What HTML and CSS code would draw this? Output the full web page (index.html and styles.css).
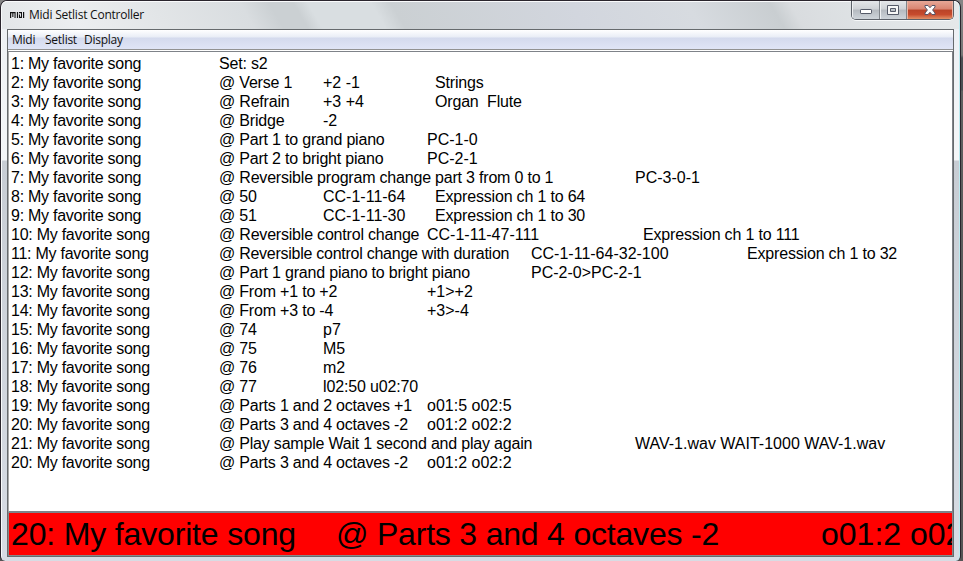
FILE: index.html
```html
<!DOCTYPE html>
<html lang="en">
<head>
<meta charset="utf-8">
<title>Midi Setlist Controller</title>
<link rel="stylesheet" href="styles.css">
</head>
<body>
<div class="window">
  <header class="titlebar">
    <svg class="logo" width="15" height="6" viewBox="0 0 15 6" fill="#111"><path d="M0 0H5.600V6H4.500V1.200H3.400V5H2.300V1.200H1.200V6H0zM6.900 0H8.100V6H6.900zM9 0H12V6H9V2.500H10V4.800H11V1.200H9zM13 0H14.200V6H13z"/></svg>
    <span class="title">Midi Setlist Controller</span>
    <div class="controls">
      <button class="control" aria-label="Minimize"><svg width="14" height="14" viewBox="0 0 14 14"><rect x="1.5" y="6.500" width="11" height="4" rx=".6" fill="#fff" stroke="#555a68"/></svg></button>
      <button class="control" aria-label="Maximize"><svg width="14" height="14" viewBox="0 0 14 14"><path d="M1.500 2.500h11v9h-11zM4.500 5.500v3h5v-3z" fill="#f7f7f7" fill-rule="evenodd" stroke="#555a68"/></svg></button>
      <button class="control close" aria-label="Close"><svg width="14" height="14" viewBox="0 0 14 14"><path d="M2 2.500H5L7 4.700l2-2.200h3v1.500L9.600 7l2.400 3v1.500H9L7 9.300l-2 2.200H2V10L4.400 7 2 4z" fill="#fff" stroke="#555568"/></svg></button>
    </div>
  </header>
  <main class="client">
    <nav class="menu"><span class="m1">Midi</span><span class="m2">Setlist</span><span class="m3">Display</span></nav>
    <section class="list">
      <div class="row"><span>1: My favorite song</span><span class="c2">Set: s2</span></div>
      <div class="row"><span>2: My favorite song</span><span class="c2">@ Verse 1</span><span class="c3">+2 -1</span><span class="c4 inset">Strings</span></div>
      <div class="row"><span>3: My favorite song</span><span class="c2">@ Refrain</span><span class="c3">+3 +4</span><span class="c4 inset">Organ&nbsp; Flute</span></div>
      <div class="row"><span>4: My favorite song</span><span class="c2">@ Bridge</span><span class="c3">-2</span></div>
      <div class="row"><span>5: My favorite song</span><span class="c2">@ Part 1 to grand piano</span><span class="c4">PC-1-0</span></div>
      <div class="row"><span>6: My favorite song</span><span class="c2">@ Part 2 to bright piano</span><span class="c4">PC-2-1</span></div>
      <div class="row"><span>7: My favorite song</span><span class="c2">@ Reversible program change part 3 from 0 to 1</span><span class="c6">PC-3-0-1</span></div>
      <div class="row"><span>8: My favorite song</span><span class="c2">@ 50</span><span class="c3">CC-1-11-64</span><span class="c4 inset">Expression ch 1 to 64</span></div>
      <div class="row"><span>9: My favorite song</span><span class="c2">@ 51</span><span class="c3">CC-1-11-30</span><span class="c4 inset">Expression ch 1 to 30</span></div>
      <div class="row"><span>10: My favorite song</span><span class="c2">@ Reversible control change</span><span class="c4">CC-1-11-47-111</span><span class="c6 inset">Expression ch 1 to 111</span></div>
      <div class="row"><span>11: My favorite song</span><span class="c2 tight">@ Reversible control change with duration</span><span class="c5">CC-1-11-64-32-100</span><span class="c7 inset">Expression ch 1 to 32</span></div>
      <div class="row"><span>12: My favorite song</span><span class="c2">@ Part 1 grand piano to bright piano</span><span class="c5">PC-2-0&gt;PC-2-1</span></div>
      <div class="row"><span>13: My favorite song</span><span class="c2">@ From +1 to +2</span><span class="c4">+1&gt;+2</span></div>
      <div class="row"><span>14: My favorite song</span><span class="c2">@ From +3 to -4</span><span class="c4">+3&gt;-4</span></div>
      <div class="row"><span>15: My favorite song</span><span class="c2">@ 74</span><span class="c3">p7</span></div>
      <div class="row"><span>16: My favorite song</span><span class="c2">@ 75</span><span class="c3">M5</span></div>
      <div class="row"><span>17: My favorite song</span><span class="c2">@ 76</span><span class="c3">m2</span></div>
      <div class="row"><span>18: My favorite song</span><span class="c2">@ 77</span><span class="c3 octaves">l02:50 u02:70</span></div>
      <div class="row"><span>19: My favorite song</span><span class="c2">@ Parts 1 and 2 octaves +1</span><span class="c4">o01:5 o02:5</span></div>
      <div class="row"><span>20: My favorite song</span><span class="c2">@ Parts 3 and 4 octaves -2</span><span class="c4">o01:2 o02:2</span></div>
      <div class="row"><span>21: My favorite song</span><span class="c2">@ Play sample Wait 1 second and play again</span><span class="c6">WAV-1.wav WAIT-1000 WAV-1.wav</span></div>
      <div class="row"><span>20: My favorite song</span><span class="c2">@ Parts 3 and 4 octaves -2</span><span class="c4">o01:2 o02:2</span></div>
    </section>
    <section class="current"><span class="song">20: My favorite song</span><span class="part">@ Parts 3 and 4 octaves -2</span><span>o01:2 o02:2</span></section>
  </main>
</div>
</body>
</html>
```
FILE: styles.css
```css
* { box-sizing: border-box; }
body { margin: 0; width: 963px; height: 561px; overflow: hidden; background: linear-gradient(#858585 0, #777 55px, #4c5054 58px, #4c5054 90px, #606060 91px, #555 100%); }
.window {
  width: 961px; height: 561px; padding: 0 6px 4px;
  border: 1px solid #2a252d; border-bottom: 0; border-radius: 7px 7px 5px 5px;
  box-shadow: inset 1px 1px #f8fafb, inset -1px 0 #bdeaf0;
  background: linear-gradient(#eceff3 0, #f4f6f8 159px, #c8cdd4 160px, #d7dce4 100%);
  display: flex; flex-direction: column;
}
.titlebar {
  height: 28px; margin: 0 -5px; padding-left: 7px; flex: none;
  display: flex; align-items: flex-start; border-top: 1px solid #fafbfc;
  background: linear-gradient(60deg, #e3e6e8 0, #eceef0 8%, #e2e5e7 17%, #d9dde0 26%, #cbd0d3 29%, #cbd0d3 31.5%, #d9dee1 33%, #d9dee1 39.5%, #cbd0d3 41.5%, #d2d6de 60%, #d7dbe0 72%, #c9ced1 80.5%, #d9dcdf 82.5%, #dfe3e5 90%, #e6e9ea 100%);
  border-radius: 5px 5px 0 0;
}
.logo { margin: 10px 0 0 1px; flex: none; }
.title { margin: 4px 0 0 4px; font: 12px/18px "Open Sans", sans-serif; letter-spacing: -.23px; color: #111; }
.controls { display: flex; margin-left: auto; margin-right: 5px; height: 19px; margin-top: -1px; border: 1px solid #5c6169; border-top: 0; border-radius: 0 0 5px 5px; overflow: hidden; box-shadow: 0 1px #f6f8f9; }
.control { width: 28px; padding: 0 0 1px; border: 0; border-right: 1px solid #80858b; display: flex; justify-content: center; align-items: center; background: linear-gradient(#e4e6e9, #cfd2d6 45%, #b5bac0 50%, #ced4da); box-shadow: inset 1px 0 #eef0f2; }
.control:nth-child(2) { width: 27px; }
.close { width: 46px; border-right: 0; background: linear-gradient(#e7a797, #d98471 45%, #b94328 50%, #c74b2d 75%, #e29168); box-shadow: inset 1px 0 #eab6a6, inset -1px 0 #eab6a6; }
.client { height: 528px; border: 1px solid #666a6d; flex: none; margin: 0; display: flex; flex-direction: column; background: #fff; width: 947px; }
.menu { height: 21px; flex: none; display: flex; padding-left: 4px; border-bottom: 1px solid #fff; background: linear-gradient(#fff 0, #e9edf6 7px, #d4daed 8px, #e0e5f6 19px, #929292 19px, #929292 20px); font: 12px/20px "Open Sans", sans-serif; letter-spacing: -.25px; color: #111; }
.m1 { width: 33px; }
.m2 { width: 39px; }
.list { height: 462px; flex: none; padding: 2px 0 0 2px; border: 1px solid #7f8389; border-width: 1px 1px 2px; border-left-color: #aaa; font: 16px/19px "Liberation Sans", Arial, sans-serif; color: #000; }
.row { display: grid; grid-template-columns: 208px repeat(6, 104px); height: 19px; white-space: nowrap; }
.row span { grid-row: 1; width: 0; }
.row span:first-child { letter-spacing: -.26px; }
.c2 { grid-column: 2; letter-spacing: -.2px; }
.c3 { grid-column: 3; }
.c4 { grid-column: 4; }
.c5 { grid-column: 5; }
.c6 { grid-column: 6; }
.c7 { grid-column: 7; }
.inset { padding-left: 8px; letter-spacing: -.18px; }
.tight { letter-spacing: -.26px; }
.octaves { letter-spacing: -.15px; }
.current { flex: 1; min-height: 0; overflow: hidden; display: grid; grid-template-columns: 325px 485px 1fr; padding-left: 2px; border: 1px solid #888; border-top: 0; background: #f00; font: 32px/43px "Liberation Sans", Arial, sans-serif; white-space: nowrap; color: #000; }
.song { letter-spacing: -.16px; }
.part { letter-spacing: -.2px; }
```
